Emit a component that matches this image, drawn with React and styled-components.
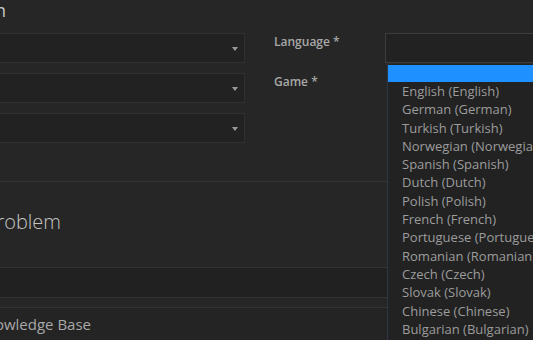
import React from "react";
import styled, { createGlobalStyle } from "styled-components";

const Global = createGlobalStyle`
  html, body { margin: 0; padding: 0; }
  body {
    background: #262626;
    font-family: "Open Sans", "Noto Sans", sans-serif;
    overflow: hidden;
    width: 533px;
    height: 340px;
  }
`;

const Page = styled.div`
  width: 533px;
  height: 340px;
  overflow: hidden;
  display: flex;
  flex-direction: column;
`;

const TopSection = styled.section`
  height: 181px;
  border-bottom: 1px solid #333;
  display: flex;
  flex-direction: column;
  gap: 13px;
  flex-shrink: 0;
`;

const Heading = styled.h2`
  margin: 0 0 0 ${(p) => p.$end - 400}px;
  width: 400px;
  text-align: right;
  white-space: nowrap;
  font-weight: ${(p) => p.$weight || 400};
  font-size: ${(p) => p.$size}px;
  line-height: ${(p) => p.$lh}px;
  color: ${(p) => p.$color};
`;

const FormGrid = styled.div`
  display: grid;
  grid-template-columns: 255px 140px 1fr;
  margin-left: -10px;
  width: 720px;
`;

const Column = styled.div`
  display: flex;
  flex-direction: column;
  gap: 10px;
  padding-left: ${(p) => p.$indent || 0}px;
`;

const SelectBox = styled.div`
  position: relative;
  box-sizing: border-box;
  height: 30px;
  background: #222;
  border: 1px solid ${(p) => (p.$open ? "#3c3c3c" : "#303030")};
`;

const Caret = styled.span`
  position: absolute;
  right: 6px;
  top: 13px;
  width: 0;
  height: 0;
  border-left: 3px solid transparent;
  border-right: 3px solid transparent;
  border-top: 4px solid #9a9a9a;
`;

const Label = styled.div`
  height: 30px;
  font-size: 12px;
  font-weight: 600;
  line-height: 18px;
  color: #a8a8a8;
  white-space: nowrap;
`;

const DropList = styled.ul`
  position: absolute;
  top: 29px;
  left: 1px;
  margin: 0;
  padding: 1px 0 0;
  list-style: none;
  width: 200px;
  height: 300px;
  background: #222;
  border-top: 1px solid #2a2a2a;
  border-left: 1px solid #2c3848;
  z-index: 5;
`;

const Option = styled.li`
  height: ${(p) => (p.$empty ? "17px" : "18.3px")};
  line-height: 18.3px;
  padding-left: 14px;
  font-size: 13px;
  white-space: nowrap;
  color: #9c9c9c;
  background: ${(p) => (p.$active ? "#1e90ff" : "transparent")};
`;

const ProblemSection = styled.section`
  box-sizing: border-box;
  height: 86px;
  padding-top: 24px;
  border-bottom: 1px solid #333;
  flex-shrink: 0;
`;

const Band = styled.div`
  flex-shrink: 0;
  height: ${(p) => p.$h}px;
  background: ${(p) => p.$bg};
  border-bottom: 1px solid #333;
`;

const KBSection = styled.section`
  flex: 1;
  padding-top: 6px;
  background: #242424;
`;

const languages = [
  "English",
  "German",
  "Turkish",
  "Norwegian",
  "Spanish",
  "Dutch",
  "Polish",
  "French",
  "Portuguese",
  "Romanian",
  "Czech",
  "Slovak",
  "Chinese",
  "Bulgarian",
];

export default function App() {
  return (
    <>
      <Global />
      <Page>
        <TopSection>
          <Heading $end={6} $size={18} $lh={20} $color="#c4c4c4">
            Game Information
          </Heading>
          <FormGrid>
            <Column>
              <SelectBox>
                <Caret />
              </SelectBox>
              <SelectBox>
                <Caret />
              </SelectBox>
              <SelectBox>
                <Caret />
              </SelectBox>
            </Column>
            <Column $indent={29}>
              <Label>Language *</Label>
              <Label>Game *</Label>
            </Column>
            <Column>
              <SelectBox $open>
                <DropList>
                  <Option $empty $active />
                  {languages.map((l) => (
                    <Option key={l}>
                      {l} ({l})
                    </Option>
                  ))}
                </DropList>
              </SelectBox>
            </Column>
          </FormGrid>
        </TopSection>
        <ProblemSection>
          <Heading $end={61} $size={20} $weight={300} $lh={31} $color="#c4c4c4">
            Describe your problem
          </Heading>
        </ProblemSection>
        <Band $h={29} $bg="#212121" />
        <Band $h={9} $bg="#262626" />
        <KBSection>
          <Heading $end={91} $size={15} $lh={20} $color="#a8a8a8">
            Knowledge Base
          </Heading>
        </KBSection>
      </Page>
    </>
  );
}
